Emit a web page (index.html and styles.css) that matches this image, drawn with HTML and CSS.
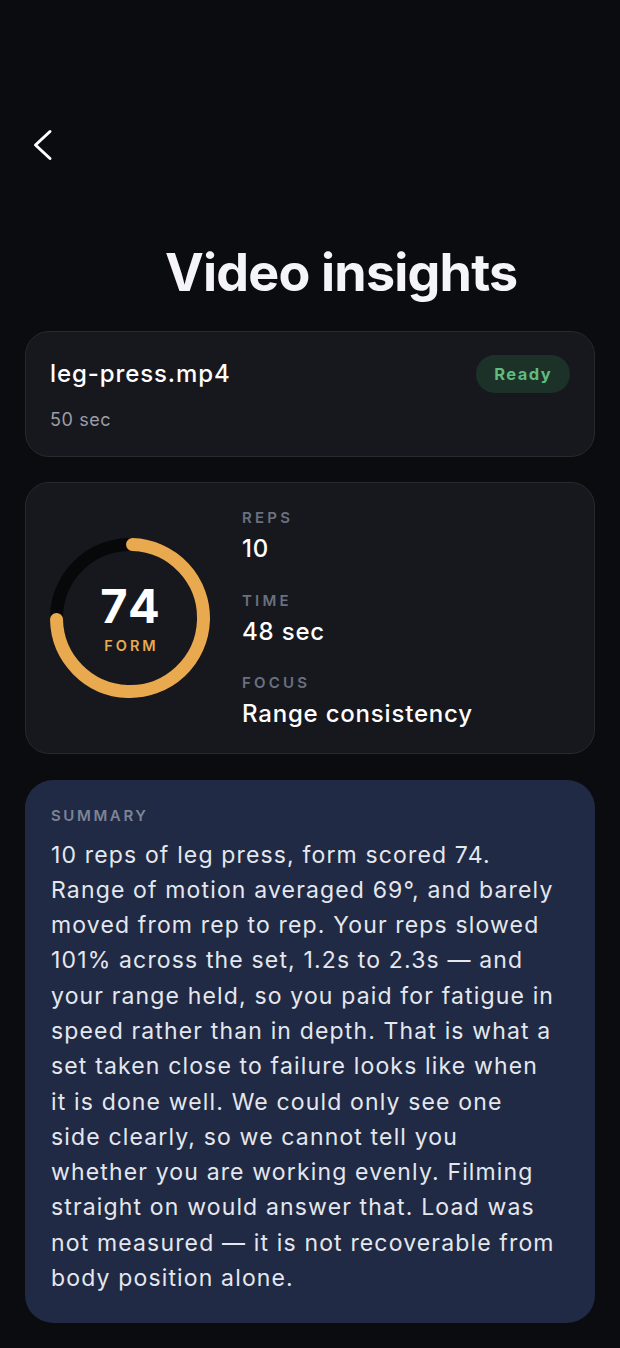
FILE: index.html
```html
<!DOCTYPE html>
<html lang="en">
<head>
  <meta charset="UTF-8"/>
  <meta name="viewport" content="width=device-width, initial-scale=1.0"/>
  <title>Video insights</title>
  <link rel="stylesheet" href="styles.css">
</head>
<body>
  <div class="page">
    <div class="topbar">
      <button class="back-btn" aria-label="Back">
        <svg width="22" height="34" viewBox="0 0 22 34" fill="none">
          <path d="M18 3.5 L3.5 17 L18 30.5" stroke="#fff" stroke-width="3" stroke-linecap="round" stroke-linejoin="round"/>
        </svg>
      </button>
    </div>

    <h1 class="title">Video insights</h1>

    <div class="card file-card">
      <div class="file-row">
        <div class="file-name">leg-press.mp4</div>
        <div class="badge">Ready</div>
      </div>
      <div class="file-meta">50 sec</div>
    </div>

    <div class="card score-card">
      <div class="ring">
        <svg width="160" height="160" viewBox="0 0 160 160">
          <circle cx="80" cy="80" r="73.5" fill="none" stroke="#07080a" stroke-width="13"/>
          <circle cx="80" cy="80" r="73.5" fill="none" stroke="#e9a94f" stroke-width="13"
                  stroke-linecap="round" stroke-dasharray="341.7 461.8" transform="rotate(-88 80 80)"/>
        </svg>
        <div class="ring-text">
          <div class="ring-num">74</div>
          <div class="ring-label">FORM</div>
        </div>
      </div>
      <div class="stats">
        <div class="stat">
          <div class="stat-label">REPS</div>
          <div class="stat-value">10</div>
        </div>
        <div class="stat">
          <div class="stat-label">TIME</div>
          <div class="stat-value">48 sec</div>
        </div>
        <div class="stat">
          <div class="stat-label">FOCUS</div>
          <div class="stat-value">Range consistency</div>
        </div>
      </div>
    </div>

    <div class="summary">
      <div class="summary-label">SUMMARY</div>
      <p class="summary-text">10 reps of leg press, form scored 74. Range of motion averaged 69°, and barely moved from rep to rep. Your reps slowed 101% across the set, 1.2s to 2.3s — and your range held, so you paid for fatigue in speed rather than in depth. That is what a set taken close to failure looks like when it is done well. We could only see one side clearly, so we cannot tell you whether you are working evenly. Filming straight on would answer that. Load was not measured — it is not recoverable from body position alone.</p>
    </div>
  </div>
</body>
</html>
```

FILE: styles.css
```css
html, body {
  margin: 0; padding: 0;
  background: #0b0c10; color: #fff;
  font-family: Inter, "Noto Sans", sans-serif;
}
.page {
  padding: 128px 25px 26px;
}
.topbar {
  height: 34px;
  display: flex; align-items: center;
}
.back-btn {
  margin-left: 7px;
  padding: 0; border: none; background: none;
  width: 22px; height: 34px;
  cursor: pointer;
}
.title {
  margin: 80px 0 27px;
  padding-left: 140px;
  font-size: 52px; line-height: 62px;
  font-weight: 700;
  letter-spacing: -0.8px;
  color: #f5f5f7;
}
.card {
  background: #17181d;
  border: 1px solid #27292e;
  border-radius: 24px;
}
.file-card {
  padding: 23px 24px 24px;
  margin-bottom: 25px;
}
.file-row {
  display: flex; align-items: center;
  justify-content: space-between;
}
.file-name {
  font-size: 24px; line-height: 30px;
  font-weight: 500;
  letter-spacing: 0.9px;
}
.badge {
  height: 38px; line-height: 38px;
  padding: 0 18px;
  border-radius: 19px;
  background: #1c3128; color: #5fbb7e;
  font-size: 16.5px; font-weight: 700;
  letter-spacing: 1.4px;
}
.file-meta {
  margin-top: 15px;
  font-size: 18px; line-height: 24px;
  color: #9b9ea6;
  letter-spacing: 0.6px;
}
.score-card {
  display: flex; align-items: center;
  padding: 25px 24px 25px;
  margin-bottom: 26px;
}
.ring {
  position: relative;
  width: 160px; height: 160px;
  flex: 0 0 auto;
  margin-right: 32px;
}
.ring svg { display: block; }
.ring-text {
  position: absolute; inset: 0;
  display: flex; flex-direction: column;
  align-items: center; justify-content: center;
}
.ring-num {
  margin-top: 2px;
  padding-left: 3px;
  font-size: 47px; line-height: 48px;
  font-weight: 700;
  letter-spacing: 3px;
}
.ring-label {
  margin-top: 6px;
  padding-left: 3px;
  font-size: 14.5px; line-height: 20px;
  font-weight: 600;
  letter-spacing: 3px;
  color: #e9a94f;
}
.stat + .stat { margin-top: 27.5px; }
.stat-label {
  font-size: 15px; line-height: 20px;
  font-weight: 600;
  letter-spacing: 3.2px;
  color: #6b7080;
}
.stat-value {
  margin-top: 7px;
  font-size: 24px; line-height: 28px;
  font-weight: 500;
  letter-spacing: 0.8px;
}
.summary {
  background: #212a44;
  border-radius: 28px;
  padding: 25.5px 37px 27px 26px;
}
.summary-label {
  font-size: 15px; line-height: 20px;
  font-weight: 600;
  letter-spacing: 2.6px;
  color: #7c8497;
}
.summary-text {
  margin: 12px 0 0;
  font-size: 23px; line-height: 35.3px;
  letter-spacing: 1.15px;
  color: #e4e7ee;
}
```
